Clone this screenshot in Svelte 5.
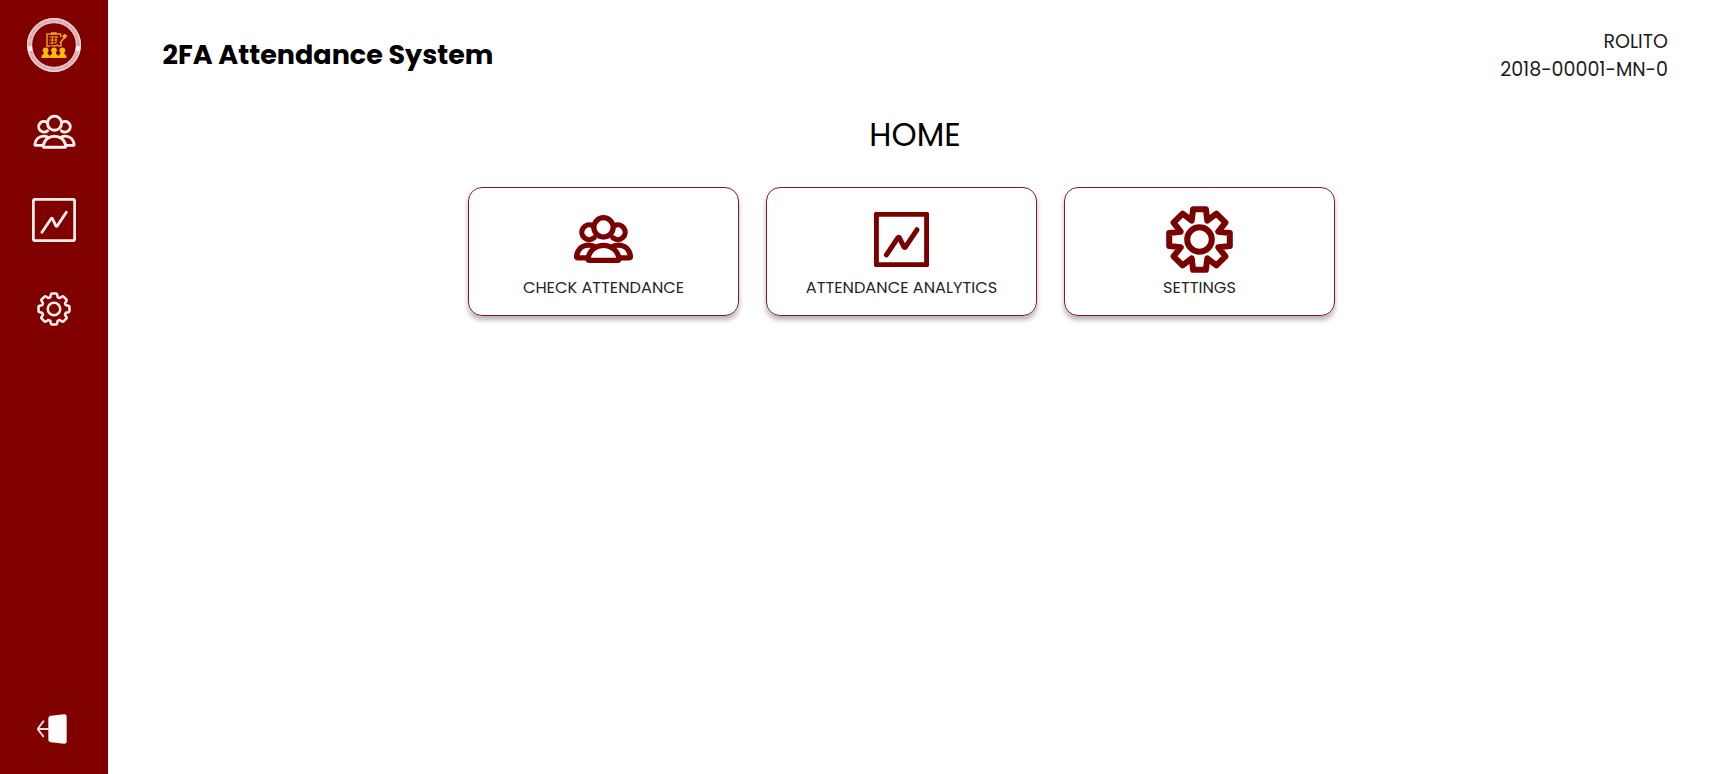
<script>
  const at = (x, y, deg) => {
    const a = (deg * Math.PI) / 180;
    return `${(x * Math.cos(a) - y * Math.sin(a)).toFixed(2)} ${(x * Math.sin(a) + y * Math.cos(a)).toFixed(2)}`;
  };
  const teeth = [0, 45, 90, 135, 180, 225, 270, 315];
  const gear =
    'M' +
    teeth
      .map((d) => `${at(-7.8, -18.8, d)} L${at(-6.4, -30.3, d)} L${at(6.4, -30.3, d)}`)
      .join(' L') +
    'Z';
  const softGear =
    'M' +
    teeth
      .map(
        (d) =>
          `${at(-7.2, -23.5, d)} L${at(-6.2, -28.5, d)} Q${at(-5.8, -30.5, d)} ${at(-4, -30.5, d)} L${at(4, -30.5, d)} Q${at(5.8, -30.5, d)} ${at(6.2, -28.5, d)} L${at(7.2, -23.5, d)} Q${at(9.2, -22.2, d)} ${at(11.525, -21.708, d)}`
      )
      .join(' L') +
    'Z';

  const cards = [
    { id: 'team', label: 'CHECK ATTENDANCE' },
    { id: 'chart', label: 'ATTENDANCE ANALYTICS' },
    { id: 'gear', label: 'SETTINGS' }
  ];
</script>

{#snippet icon(id, outline)}
  {#if id === 'team'}
    <svg class="icon team" viewBox="0 0 180 148">
      <circle cx="90" cy="37" r="29.5" />
      <path d="M57 32A22.5 22.5 0 1 0 61 69M123 32A22.5 22.5 0 1 1 119 69" />
      <path d="M46 138H134Q138 138 137 131C133 106 112 92 90 92C68 92 47 106 43 131Q42 138 46 138Z" />
      <path d="M41 130H11Q7 130 8 124C11 104 25 91 45 91Q54 91 61 95M139 130H169Q173 130 172 124C169 104 155 91 135 91Q126 91 119 95" />
    </svg>
  {:else if id === 'chart'}
    <svg class="icon chart" viewBox="0 0 164 164">
      <rect class="frame" />
      <path d="M37 128L71 77Q74 73 76 77L89 104Q91 107 94 104L128 53" />
    </svg>
  {:else}
    <svg class="icon gear" viewBox="-33.5 -33.5 67 67">
      <path d={outline} />
      <circle r="12.3" />
    </svg>
  {/if}
{/snippet}

<div class="app">
  <nav class="sidebar">
    <a class="slot" href="#home" aria-label="Home">
      <svg class="logo" viewBox="81 54 162 162">
        <circle cx="162" cy="135" r="73.5" fill="none" stroke="#e3bcbc" stroke-width="15" />
        <circle cx="162" cy="135" r="73" fill="none" stroke="#d49c9c" stroke-width="6" stroke-dasharray="3 4 5 3 2 5" />
        <circle cx="162" cy="135" r="79.5" fill="none" stroke="#f0dada" stroke-width="3" />
        <circle cx="162" cy="135" r="67" fill="none" stroke="#e6c4c4" stroke-width="2.5" />
        <path d="M90 139L92 153M234 139L232 153" stroke="#fff5f5" stroke-width="11" />
        <g fill="none" stroke="#e69a12" stroke-width="4.5">
          <path d="M141 140V102H182V112M141 102V139H151M174 138H183V128" />
          <path d="M148 111H175M148 120H172M148 129H169M157 108V132M168 108V129" stroke-width="3.5" />
          <path d="M153 135Q163 142 174 134" />
          <path d="M180 130L194 110" stroke-width="5.5" />
        </g>
        <path d="M153 97H170V103H153ZM186 108L195 101L202 108L194 118Z" fill="#f3ac0c" />
        <g fill="#f9bd06">
          {#each [137, 162, 187] as x}
            <circle cx={x} cy="151" r="8.5" />
            <path d="M{x - 12.5} 174V169Q{x - 12} 164 {x - 6} 162V156H{x + 6}V162Q{x + 12} 164 {x + 12.5} 169V174Z" />
          {/each}
        </g>
      </svg>
    </a>
    {#each cards as c}
      <a class="slot" href="#{c.id}" aria-label={c.label}>{@render icon(c.id, softGear)}</a>
    {/each}
    <a class="slot exit" href="#logout" aria-label="Log out">
      <svg viewBox="111 68 102 96" width="34" height="32">
        <path d="M153 76L192 72Q200 71 200 80V152Q200 161 192 160L153 156Q145 155 145 147V85Q145 77 153 76Z" fill="#fff" />
        <path d="M147 116H113M130 93L113 116L130 138" fill="none" stroke="#f8dede" stroke-width="5.5" stroke-linecap="round" stroke-linejoin="round" />
      </svg>
    </a>
  </nav>

  <main>
    <header>
      <h1>2FA Attendance System</h1>
      <div class="user">
        <div>ROLITO</div>
        <div>2018-00001-MN-0</div>
      </div>
    </header>
    <h2>HOME</h2>
    <section class="cards">
      {#each cards as c}
        <a class="card" href="#{c.id}">
          <span class="picture">{@render icon(c.id, gear)}</span>
          <span class="label">{c.label}</span>
        </a>
      {/each}
    </section>
  </main>
</div>

<style>
  :global(body) {
    margin: 0;
    background: #fff;
  }
  .app {
    display: flex;
    height: 774px;
    font-family: Poppins, Inter, sans-serif;
    font-weight: 400;
    color: #000;
    overflow: hidden;
  }
  a {
    color: inherit;
    text-decoration: none;
  }
  .sidebar {
    display: flex;
    flex-direction: column;
    flex: none;
    width: 108px;
    box-sizing: border-box;
    padding: 1px 0;
    background: #800000;
  }
  .slot {
    display: flex;
    align-items: center;
    justify-content: center;
    height: 88px;
  }
  .slot + .slot {
    padding-bottom: 1px;
    box-sizing: border-box;
  }
  .exit {
    margin-top: auto;
  }
  .logo {
    width: 54px;
    height: 54px;
  }
  .icon {
    display: block;
    fill: none;
    stroke-linecap: round;
    stroke-linejoin: round;
  }
  .sidebar .icon {
    stroke: #fff0ee;
  }
  .sidebar .team {
    width: 43px;
    height: 36px;
    margin-bottom: 1px;
    stroke-width: 12;
  }
  .sidebar .chart {
    width: 44px;
    height: 44px;
    margin-bottom: 1px;
    stroke-width: 10.5;
  }
  .sidebar .gear {
    width: 34px;
    height: 34px;
    stroke-width: 5;
  }
  .frame {
    x: 7px;
    y: 7px;
    width: 150px;
    height: 150px;
  }
  .sidebar .frame {
    x: 5px;
    y: 5px;
    width: 154px;
    height: 154px;
    rx: 7px;
  }
  .card .icon {
    stroke: #7b0000;
  }
  .card .team {
    width: 59px;
    height: 49px;
    stroke-width: 16;
  }
  .card .chart {
    width: 55px;
    height: 55px;
    margin-top: -1px;
    stroke-width: 15;
  }
  .card .gear {
    width: 67px;
    height: 67px;
    margin-top: -1px;
    stroke-width: 6;
  }
  main {
    flex: 1;
  }
  header {
    display: flex;
    justify-content: space-between;
    padding: 28px 54px 0 54.5px;
  }
  h1 {
    margin: 11px 0 0;
    font-size: 27px;
    line-height: 32px;
    font-weight: 700;
  }
  .user {
    text-align: right;
    font-size: 19px;
    line-height: 28px;
    color: #1c1c1c;
  }
  h2 {
    margin: 33px 0 0;
    font-size: 32px;
    line-height: 36px;
    font-weight: 400;
    text-align: center;
  }
  .cards {
    display: flex;
    justify-content: center;
    margin-top: 34px;
  }
  .card {
    display: flex;
    flex-direction: column;
    align-items: center;
    box-sizing: border-box;
    width: 271px;
    height: 129px;
    margin-right: 27px;
    padding-top: 18px;
    border: 1px solid #7d1c22;
    border-radius: 14px;
    box-shadow: 0 4px 5px rgba(40, 15, 15, 0.32);
  }
  .picture {
    display: flex;
    align-items: center;
    height: 67px;
  }
  .label {
    margin-top: 4px;
    font-size: 16.2px;
    line-height: 21px;
    color: #262626;
  }
</style>
